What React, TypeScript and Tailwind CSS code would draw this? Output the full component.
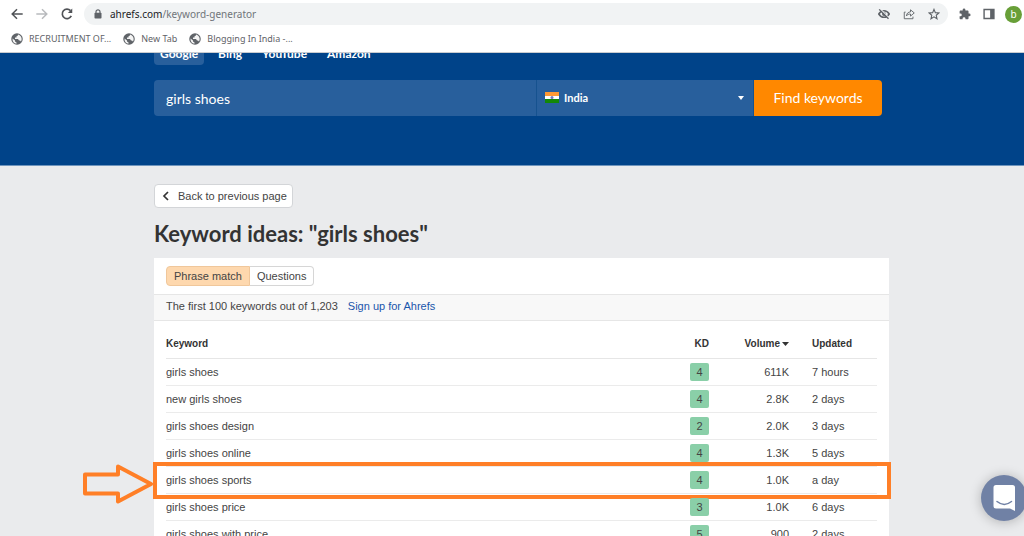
// Keyword generator results page, shown inside a browser window with
// one row of the table marked by an arrow and a frame.

import { clsx } from "clsx";
import type { ReactNode } from "react";

type Row = { keyword: string; kd: number; volume: string; updated: string; marked?: boolean };

const ROWS: Row[] = [
  { keyword: "girls shoes", kd: 4, volume: "611K", updated: "7 hours" },
  { keyword: "new girls shoes", kd: 4, volume: "2.8K", updated: "2 days" },
  { keyword: "girls shoes design", kd: 2, volume: "2.0K", updated: "3 days" },
  { keyword: "girls shoes online", kd: 4, volume: "1.3K", updated: "5 days" },
  { keyword: "girls shoes sports", kd: 4, volume: "1.0K", updated: "a day", marked: true },
  { keyword: "girls shoes price", kd: 3, volume: "1.0K", updated: "6 days" },
  { keyword: "girls shoes with price", kd: 5, volume: "900", updated: "2 days" },
];

const ENGINES = ["Google", "Bing", "YouTube", "Amazon"];
const BOOKMARKS = ["RECRUITMENT OF...", "New Tab", "Blogging In India -..."];

export default function App() {
  return (
    <div className="flex h-screen flex-col overflow-hidden bg-[#eaebed] font-['Liberation_Sans',Arial,sans-serif] text-[11px] text-[#444]">
      <BrowserBar />
      <Hero />
      <main className="min-h-0 flex-1 pt-[18px] pr-[135px] pl-[154px]">
        <button
          type="button"
          className="flex h-6 items-center gap-2 rounded-sm border border-[#d3d5d8] bg-white px-[5px] pl-[7px]"
        >
          <svg width="8" height="10" viewBox="0 0 8 10" fill="none" stroke="#333" strokeWidth="1.7" aria-hidden="true">
            <path d="M6 1 2 5l4 4" />
          </svg>
          Back to previous page
        </button>
        <h1 className="mt-3 mb-2.5 font-['Lato',sans-serif] text-[22px] leading-7 font-bold whitespace-nowrap text-[#333]">
          Keyword ideas: "girls shoes"
        </h1>
        <Results />
      </main>
      <ChatButton />
    </div>
  );
}

function BrowserBar() {
  return (
    <header className="h-[53px] shrink-0 border-b border-[#c9ccd0] bg-white font-['Noto_Sans',sans-serif] text-[#5f6368]">
      <div className="flex h-7 items-center pr-0.5 pl-2.5">
        <IconButton label="Back">
          <path d="M14.5 8H2.5M8 2.5 2.5 8 8 13.5" fill="none" stroke="#505357" strokeWidth="1.7" />
        </IconButton>
        <IconButton label="Forward" className="ml-[11px]">
          <path d="M1.5 8h12M8 2.5 13.5 8 8 13.5" fill="none" stroke="#b8babd" strokeWidth="1.7" />
        </IconButton>
        <IconButton label="Reload" className="ml-[11px]">
          <path d="M12.9 10.2A5.4 5.4 0 1 1 12 4.2" fill="none" stroke="#505357" strokeWidth="1.9" />
          <path d="M14 1.8v5H9z" fill="#505357" />
        </IconButton>
        <div className="ml-2.5 flex h-[22px] min-w-0 flex-1 items-center rounded-full bg-[#f1f3f4] pr-2 pl-2.5">
          <svg width="8" height="10" viewBox="0 0 8 10" aria-hidden="true">
            <path d="M2 4V2.8a2 2 0 0 1 4 0V4" fill="none" stroke="#5f6368" strokeWidth="1.2" />
            <rect x="0.5" y="3.8" width="7" height="5.7" rx="0.8" fill="#5f6368" />
          </svg>
          <p className="ml-2 flex-1 truncate text-[10px] text-[#70757a]">
            <span className="text-[#202124]">ahrefs.com</span>/keyword-generator
          </p>
          <div className="flex items-center gap-[13px]">
            <IconButton label="Third-party cookies blocked" small>
              <path
                d="M1 8s2.6-4.4 7-4.4S15 8 15 8s-2.6 4.4-7 4.4S1 8 1 8z"
                fill="none"
                stroke="currentColor"
                strokeWidth="2"
              />
              <circle cx="8" cy="8" r="2.6" fill="currentColor" />
              <path d="M3 1.2 15 13.4" stroke="#f1f3f4" strokeWidth="1.6" />
              <path d="M1.6 1.8 14 14.4" stroke="currentColor" strokeWidth="1.8" />
            </IconButton>
            <IconButton label="Share" small>
              <g fill="none" stroke="currentColor" strokeWidth="1.2">
                <path d="M3.5 5.5H1.7v8.8h11.6v-2.8" />
                <path d="M4.5 10.5C5 7 7 5.3 10 5.2V2.4L15 6.6l-5 4.2V8C7.5 8 5.8 8.8 4.5 10.5z" />
              </g>
            </IconButton>
            <IconButton label="Bookmark this page" small>
              <path
                d="m8 1.8 1.8 4.4 4.7.4L11 9.7l1 4.6-4-2.5-4 2.5 1-4.6-3.5-3.1 4.7-.4z"
                fill="none"
                stroke="currentColor"
                strokeWidth="1.5"
              />
            </IconButton>
          </div>
        </div>
        <IconButton label="Extensions" className="ml-[11px]" small>
          <path
            d="M13.6 7.4h-.9V4.6c0-.8-.6-1.4-1.4-1.4H8.5v-.9a1.8 1.8 0 0 0-3.6 0v.9H2.2C1.4 3.2.8 3.8.8 4.6v2.7h1a1.9 1.9 0 0 1 0 3.8h-1v2.6c0 .8.6 1.4 1.4 1.4h2.6v-1a1.9 1.9 0 0 1 3.8 0v1h2.7c.8 0 1.4-.6 1.4-1.4V11h.9a1.8 1.8 0 0 0 0-3.6z"
            fill="currentColor"
          />
        </IconButton>
        <IconButton label="Side panel" className="ml-3" small>
          <path d="M.5 1h15v14H.5zM2.4 2.9v10.2h7.1V2.9z" fill="currentColor" fillRule="evenodd" />
        </IconButton>
        <button
          type="button"
          aria-label="Profile"
          className="ml-2.5 size-[17px] shrink-0 rounded-full bg-[#689f38] text-[10px] leading-none text-white"
        >
          b
        </button>
      </div>
      <nav aria-label="Bookmarks" className="flex h-[21px] items-center gap-3 pl-[11px] text-[9px]">
        {BOOKMARKS.map((name) => (
          <a key={name} href="#" className="flex items-center gap-1.5 whitespace-nowrap">
            <Globe />
            {name}
          </a>
        ))}
      </nav>
    </header>
  );
}

type IconButtonProps = { label: string; small?: boolean; className?: string; children: ReactNode };

function IconButton({ label, small, className, children }: IconButtonProps) {
  return (
    <button type="button" aria-label={label} className={clsx("shrink-0", className)}>
      <svg className={small ? "size-3" : "size-3.5"} viewBox="0 0 16 16" aria-hidden="true">
        {children}
      </svg>
    </button>
  );
}

function Globe() {
  return (
    <svg className="size-3" viewBox="0 0 24 24" aria-hidden="true">
      <circle cx="12" cy="12" r="11.5" fill="#5f6368" />
      <path d="M3 11l5 4v2l3 2v2.5C6 21 2.5 17 3 11zM14 3c0 3-1 3-3 3.5V9H8v3h6l2 3h2l2 2c3-5 1-12-6-14z" fill="#f4f4f4" />
    </svg>
  );
}

function Hero() {
  return (
    <section className="flex h-[113px] shrink-0 flex-col justify-end gap-[15px] overflow-hidden border-b border-[#6f95bd] bg-[#004389] pr-[142px] pb-[49px] pl-[154px] font-['Lato',sans-serif] text-white">
      <div className="flex shrink-0 gap-2 text-[12px] leading-[23px] font-bold">
        {ENGINES.map((name, i) => (
          <button
            key={name}
            type="button"
            className={clsx("rounded-sm px-1.5", i === 0 && "bg-[#285f9c]")}
          >
            {name}
          </button>
        ))}
      </div>
      <form className="flex h-9 shrink-0" onSubmit={(e) => e.preventDefault()}>
        <input
          type="text"
          aria-label="Keyword"
          defaultValue="girls shoes"
          className="min-w-0 flex-1 rounded-l-sm bg-[#285f9c] px-3 text-[14px] outline-none"
        />
        <div className="relative w-[218px] border-x border-[#16528f] bg-[#285f9c]">
          <select
            aria-label="Country"
            className="size-full appearance-none bg-transparent pl-[27px] text-[11px] font-bold outline-none"
          >
            <option>India</option>
          </select>
          <svg className="pointer-events-none absolute top-3 left-2" width="14" height="11" aria-hidden="true">
            <rect width="14" height="11" fill="#fff" />
            <rect width="14" height="4" fill="#ff9933" />
            <rect y="7" width="14" height="4" fill="#138808" />
            <circle cx="7" cy="5.5" r="1.5" fill="#7777bb" />
          </svg>
          <svg className="pointer-events-none absolute top-4 right-[9px]" width="6" height="4" aria-hidden="true">
            <path d="M0 0h6L3 4z" fill="#fff" />
          </svg>
        </div>
        <button type="submit" className="w-32 rounded-r-sm bg-[#ff8800] pb-px text-[14px]">
          Find keywords
        </button>
      </form>
    </section>
  );
}

function Results() {
  return (
    <section className="bg-white">
      <div className="px-3 py-2">
        <div className="flex h-5 w-fit">
          <button type="button" className="rounded-l-sm border border-[#f0c79b] bg-[#fed8ae] px-[7px] leading-none">
            Phrase match
          </button>
          <button type="button" className="rounded-r-sm border border-l-0 border-[#d6d6d6] px-[7px] leading-none">
            Questions
          </button>
        </div>
      </div>
      <div className="flex h-[27px] items-center gap-2.5 border-y border-[#e6e6e6] bg-[#f8f8f8] px-3 pb-0.5">
        <p>The first 100 keywords out of 1,203</p>
        <a href="#" className="text-[#1a55ab]">
          Sign up for Ahrefs
        </a>
      </div>
      <div className="px-3">
        <table className="w-full table-fixed">
          <thead>
            <tr className="h-[37px] border-b border-[#e6e6e6] text-[10px] text-[#333]">
              <th className="pt-2 text-left">Keyword</th>
              <th className="w-16 pt-2 text-right">KD</th>
              <th className="w-20 pt-2 text-right">
                Volume
                <svg className="ml-0.5 inline" width="7" height="4" aria-hidden="true">
                  <path d="M0 0h7L3.5 4z" fill="#333" />
                </svg>
              </th>
              <th className="w-[88px] pt-2 pl-[23px] text-left">Updated</th>
            </tr>
          </thead>
          <tbody>
            {ROWS.map((row) => (
              <tr key={row.keyword} className="relative h-[27px] border-b border-[#ebebeb]">
                <td className="pt-0.5">
                  {row.keyword}
                  {row.marked && <Marker />}
                </td>
                <td>
                  <span className="ml-auto block h-[18px] w-[19px] rounded-xs bg-[#8acfa8] text-center leading-[18px]">
                    {row.kd}
                  </span>
                </td>
                <td className="pt-0.5 text-right">{row.volume}</td>
                <td className="pt-0.5 pl-[23px]">{row.updated}</td>
              </tr>
            ))}
          </tbody>
        </table>
      </div>
    </section>
  );
}

// Frame round the row, with the arrow that points at it from the left
function Marker() {
  return (
    <>
      <span className="pointer-events-none absolute -top-1 -right-3.5 -bottom-[7px] -left-[13px] border-4 border-[#ff7f27]" />
      <svg
        className="pointer-events-none absolute -top-0.5 -left-[83px]"
        width="71"
        height="40"
        viewBox="0 0 71 40"
        fill="none"
        stroke="#ff7f27"
        strokeWidth="4"
        strokeLinejoin="round"
        aria-hidden="true"
      >
        <path d="M2 10.5h33v-8L68 20 35 37.5v-8H2z" />
      </svg>
    </>
  );
}

function ChatButton() {
  return (
    <button
      type="button"
      aria-label="Open chat"
      className="fixed -right-[3px] bottom-[15px] flex size-[46px] items-center justify-center rounded-full bg-[#7081a5] shadow-[0_1px_12px_rgba(0,0,0,0.25)]"
    >
      <svg width="23" height="26" viewBox="0 0 23 26" fill="none" aria-hidden="true">
        <path d="M3 0h16.5A2.500 2.500 0 0 1 22 2.500V26l-5-2.500H3A2.500 2.500 0 0 1 .5 21V2.500A2.500 2.500 0 0 1 3 0z" fill="#fff" />
        <path d="M4 16.5c4.500 3.600 10 3.600 14.500 0" stroke="#7081a5" strokeWidth="1.5" strokeLinecap="round" />
      </svg>
    </button>
  );
}
